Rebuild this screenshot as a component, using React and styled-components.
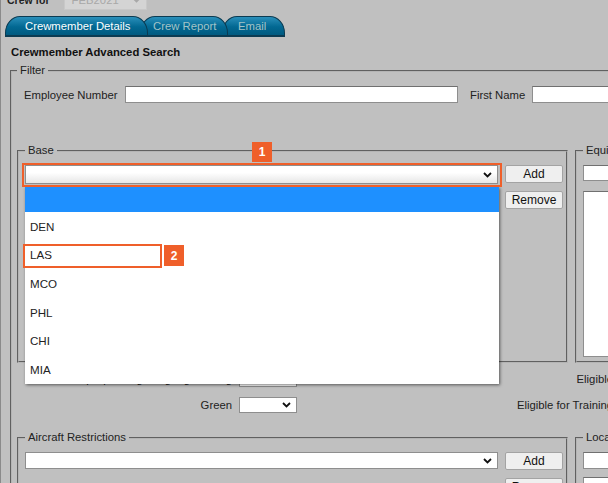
import React from 'react';
import styled, { createGlobalStyle } from 'styled-components';

const Global = createGlobalStyle`
  html, body { margin: 0; padding: 0; background: #c0c0c0; overflow: hidden; }
  body { font-family: "Liberation Sans", Arial, sans-serif; font-size: 11.3px; color: #222; }
  #root { width: 608px; height: 483px; overflow: hidden; }
`;

const Page = styled.div`
  position: relative;
  display: flow-root;
  width: 900px;
  height: 483px;
  box-shadow: inset 1px 0 0 #8a8a8a;
`;

const CrewRow = styled.div`
  display: flex;
  align-items: center;
  height: 20px;
  margin-top: -10px;
  padding-left: 7px;
  gap: 14px;
`;

const CrewLabel = styled.span`
  font-weight: bold;
  font-size: 10.5px;
  color: #222;
`;

const DisabledSelect = styled.div`
  width: 83px;
  height: 20px;
  box-sizing: border-box;
  background: #d4d4d4;
  border: 1px solid #c8c8c8;
  display: flex;
  align-items: center;
  justify-content: space-between;
  padding: 0 5px 0 7px;
  color: #a8a8a8;
  font-size: 11.3px;
`;

const TabBar = styled.div`
  display: flex;
  margin-top: 6px;
  padding-left: 5px;
  height: 21px;
`;

const Tab = styled.div`
  position: relative;
  z-index: ${p => p.$z};
  width: ${p => p.$w}px;
  margin-left: ${p => p.$ml}px;
  padding-left: ${p => p.$pl}px;
  height: 21px;
  box-sizing: border-box;
  display: flex;
  align-items: center;
  border: 1px solid #0b3b52;
  border-bottom-width: 2px;
  border-radius: 15px 15px 0 0 / 17px 17px 0 0;
  background: linear-gradient(#2a8fba, #026892 55%, #005a80);
  color: ${p => (p.$active ? '#ffffff' : '#a3c3c7')};
  font-size: 11.3px;
  white-space: nowrap;
`;

const Title = styled.div`
  margin: 9px 0 0 11px;
  font-weight: bold;
  line-height: 13px;
  color: #111;
`;

const Fieldset = styled.fieldset`
  margin: ${p => p.$m || '0'};
  width: ${p => p.$w}px;
  height: ${p => (p.$h ? `${p.$h}px` : 'auto')};
  box-sizing: border-box;
  border: 2px groove #b4b4b4;
  padding: 0 ${p => p.$px || 6}px;
  min-width: 0;
  flex: none;
`;

const Legend = styled.legend`
  padding: 0 3px 0 3px;
  line-height: 13px;
  font-size: 11.3px;
  color: #222;
`;

const Row = styled.div`
  display: flex;
  align-items: ${p => p.$align || 'center'};
  gap: ${p => p.$gap || 0}px;
  margin-top: ${p => p.$mt || 0}px;
  padding-left: ${p => p.$pl || 0}px;
`;

const Label = styled.span`
  width: ${p => p.$w}px;
  margin-left: ${p => p.$ml || 0}px;
  flex: none;
  white-space: nowrap;
  color: #222;
`;

const Input = styled.div`
  width: ${p => p.$w}px;
  height: ${p => p.$h || 17}px;
  box-sizing: border-box;
  background: #fff;
  border: 1px solid #8e8e8e;
  border-top-color: #707070;
  flex: none;
`;

const Select = styled.div`
  width: ${p => p.$w}px;
  height: ${p => p.$h || 17}px;
  box-sizing: border-box;
  background: ${p => (p.$open ? 'linear-gradient(#ffffff 40%, #e6e6e6)' : '#fff')};
  border: 1px solid #8e8e8e;
  display: flex;
  align-items: center;
  justify-content: flex-end;
  padding-right: 5px;
  flex: none;
`;

const Btn = styled.button`
  width: 58px;
  height: 18px;
  padding: 0;
  box-sizing: border-box;
  background: #efefef;
  border: 1px solid #a3a3a3;
  border-radius: 2px;
  font-family: "Liberation Sans", Arial, sans-serif;
  font-size: 12px;
  color: #111;
  line-height: 16px;
`;

const BtnCol = styled.div`
  display: flex;
  flex-direction: column;
  gap: 8px;
`;

const List = styled.div`
  width: ${p => p.$w}px;
  height: ${p => p.$h}px;
  margin-top: ${p => p.$mt || 0}px;
  box-sizing: border-box;
  background: #fff;
  border: 1px solid #8e8e8e;
  border-top-color: #707070;
`;

const Grid = styled.div`
  display: grid;
  grid-template-columns: 215px 58px 309px 58px;
  grid-auto-rows: 16px;
  column-gap: 7px;
  row-gap: 10px;
  margin-top: 8px;
  align-items: center;
`;

const RLabel = styled.span`
  text-align: right;
  white-space: nowrap;
  color: #222;
`;

const Dropdown = styled.div`
  position: absolute;
  left: 25px;
  top: 187px;
  width: 474px;
  background: #fff;
  box-shadow: 1px 1px 3px rgba(0, 0, 0, 0.55);
  z-index: 10;
`;

const Option = styled.div`
  height: ${p => (p.$sel ? 25 : 28.6)}px;
  display: flex;
  align-items: center;
  padding-left: 5px;
  background: ${p => (p.$sel ? '#1e90ff' : '#fff')};
  font-size: 11.6px;
  color: #222;
`;

const Highlight = styled.div`
  position: absolute;
  left: ${p => p.$x}px;
  top: ${p => p.$y}px;
  width: ${p => p.$w}px;
  height: ${p => p.$h}px;
  box-sizing: border-box;
  border: ${p => p.$b}px solid #ef5f2a;
  z-index: 20;
`;

const Badge = styled.div`
  position: absolute;
  left: ${p => p.$x}px;
  top: ${p => p.$y}px;
  width: 20px;
  height: ${p => p.$h}px;
  background: #ef5f2a;
  color: #fff;
  font-weight: bold;
  font-size: 12px;
  display: flex;
  align-items: center;
  justify-content: center;
  z-index: 20;
`;

const Chevron = ({ color = '#111' }) => (
  <svg width="9" height="6" viewBox="0 0 9 6">
    <path d="M1 1 L4.5 4.5 L8 1" fill="none" stroke={color} strokeWidth="1.8" />
  </svg>
);

const options = ['DEN', 'LAS', 'MCO', 'PHL', 'CHI', 'MIA'];

export default function App() {
  return (
    <Page>
      <Global />
      <CrewRow>
        <CrewLabel>Crew for</CrewLabel>
        <DisabledSelect>
          <span>FEB2021</span>
          <Chevron color="#a8a8a8" />
        </DisabledSelect>
      </CrewRow>

      <TabBar>
        <Tab $w={143} $pl={19} $ml={0} $z={3} $active>Crewmember Details</Tab>
        <Tab $w={88} $pl={12} $ml={-8} $z={2}>Crew Report</Tab>
        <Tab $w={63} $pl={15} $ml={-6} $z={1}>Email</Tab>
      </TabBar>

      <Title>Crewmember Advanced Search</Title>

      <Fieldset $m="5px 0 0 10px" $w={880} $px={5}>
        <Legend>Filter</Legend>
        <Row $mt={9} $pl={7}>
          <Label $w={101}>Employee Number</Label>
          <Input $w={333} />
          <Label $w={62} $ml={12}>First Name</Label>
          <Input $w={200} />
        </Row>

        <Row $mt={41} $gap={7} $align="flex-start">
          <Fieldset $w={551} $h={219}>
            <Legend>Base</Legend>
            <Row $mt={8} $gap={7} $align="flex-start">
              <Select $w={473} $h={19} $open>
                <Chevron />
              </Select>
              <BtnCol>
                <Btn>Add</Btn>
                <Btn>Remove</Btn>
              </BtnCol>
            </Row>
          </Fieldset>
          <Fieldset $w={300} $h={219}>
            <Legend>Equipment</Legend>
            <Row $mt={8}>
              <Input $w={200} $h={16} />
            </Row>
            <List $w={200} $h={166} $mt={10} />
          </Fieldset>
        </Row>

        <Grid>
          <RLabel>Top Speaking Language Rating</RLabel>
          <Input $w={58} $h={16} />
          <RLabel>Eligible</RLabel>
          <Input $w={58} $h={16} />
          <RLabel>Green</RLabel>
          <Select $w={58} $h={16}>
            <Chevron />
          </Select>
          <RLabel>Eligible for Training</RLabel>
          <Select $w={58} $h={16}>
            <Chevron />
          </Select>
        </Grid>

        <Row $mt={18} $gap={7} $align="flex-start">
          <Fieldset $w={551} $h={120}>
            <Legend>Aircraft Restrictions</Legend>
            <Row $mt={8} $gap={7} $align="flex-start">
              <Select $w={473} $h={17}>
                <Chevron />
              </Select>
              <BtnCol>
                <Btn>Add</Btn>
                <Btn>Remove</Btn>
              </BtnCol>
            </Row>
            <List $w={473} $h={60} $mt={8} />
          </Fieldset>
          <Fieldset $w={300} $h={120}>
            <Legend>Location</Legend>
            <Row $mt={8}>
              <Input $w={200} $h={17} />
            </Row>
            <List $w={200} $h={60} $mt={8} />
          </Fieldset>
        </Row>
      </Fieldset>

      <Dropdown>
        <Option $sel />
        {options.map(o => (
          <Option key={o}>{o}</Option>
        ))}
      </Dropdown>

      <Highlight $x={22} $y={163} $w={480} $h={24} $b={2.5} />
      <Badge $x={252} $y={142} $h={20}>1</Badge>
      <Highlight $x={23} $y={244} $w={139} $h={24} $b={2} />
      <Badge $x={164} $y={245} $h={21}>2</Badge>
    </Page>
  );
}
